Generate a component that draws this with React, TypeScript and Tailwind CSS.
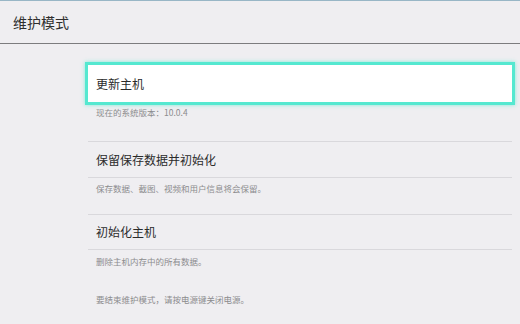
import React from 'react';

const font = { fontFamily: '"Noto Sans CJK SC", "Noto Sans", sans-serif' };

export default function App() {
  return (
    <div
      className="w-[520px] h-[324px] bg-[#efeef1] border-t-[1px] border-[#98b6c6] overflow-hidden"
      style={font}
    >
      {/* 标题栏 */}
      <div className="h-[43px] flex items-center pl-[13px] border-b border-[#7c7c7e] text-[14px] text-[#2e2e2e]">
        维护模式
      </div>

      <div className="ml-[88px] w-[424px] mt-[18px]">
        {/* 更新主机（选中） */}
        <div className="-mx-[3px] h-[43px] flex items-center pl-[8px] bg-white border-[3px] border-[#55e8d0] shadow-[0_0_4px_rgba(85,232,208,0.7)] text-[12px] text-[#2b2b2b]">
          更新主机
        </div>
        <div className="h-[36px] pt-[1px] pl-[8px] text-[8.5px] leading-[12px] text-[#8c8c8e]">
          现在的系统版本：10.0.4
        </div>

        {/* 保留保存数据并初始化 */}
        <div className="h-[36px] flex items-center pl-[8px] border-t border-[#d9d8dc] text-[12px] text-[#2b2b2b]">
          保留保存数据并初始化
        </div>
        <div className="h-[37px] pt-[4px] pl-[8px] border-t border-[#d9d8dc] text-[8.5px] leading-[12px] text-[#8c8c8e]">
          保存数据、截图、视频和用户信息将会保留。
        </div>

        {/* 初始化主机 */}
        <div className="h-[35px] flex items-center pl-[8px] border-t border-[#d9d8dc] text-[12px] text-[#2b2b2b]">
          初始化主机
        </div>
        <div className="pt-[5px] pl-[8px] border-t border-[#d9d8dc] text-[8.5px] leading-[12px] text-[#8c8c8e]">
          删除主机内存中的所有数据。
        </div>

        <div className="mt-[26px] pl-[8px] text-[8.5px] leading-[12px] text-[#8c8c8e]">
          要结束维护模式，请按电源键关闭电源。
        </div>
      </div>
    </div>
  );
}
